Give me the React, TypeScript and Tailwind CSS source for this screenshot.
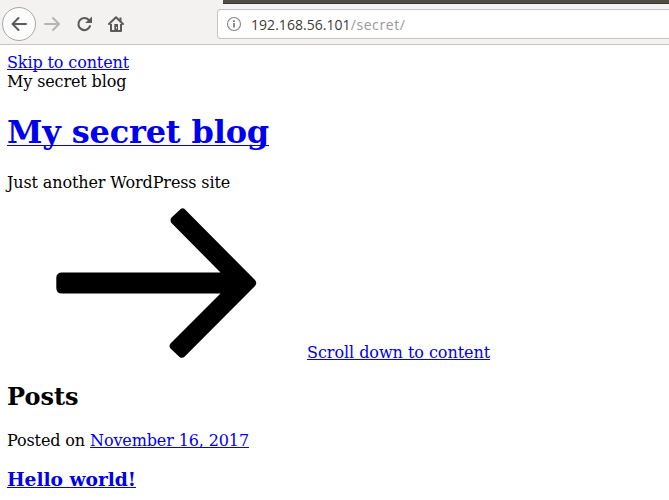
function Toolbar() {
  return (
    <header className="h-[45px] border-b border-[#c9c5c1] bg-[#f3f2f0]">
      <div className="ml-[223px] h-1 border-b border-[#3b3832] bg-[#504d45]" />
      <div className="flex h-10 items-center">
        <svg width="217" height="40" viewBox="0 4 217 40" fill="none" className="shrink-0">
          <circle cx="19" cy="24" r="16.5" fill="#fcfcfc" stroke="#aaa8a6" />
          <path d="M26 24H12.5M18.5 18l-6 6 6 6" stroke="#5c5b59" strokeWidth="2" strokeLinecap="round" strokeLinejoin="round" />
          <path d="M45 24h13.5M53 18l6 6-6 6" stroke="#b5b4b2" strokeWidth="2" strokeLinecap="round" strokeLinejoin="round" />
          <path d="M90 26.2A6 6 0 1 1 88.8 20" stroke="#5c5b59" strokeWidth="2.1" strokeLinecap="round" />
          <path d="M92 16.5V23h-6.8Z" fill="#5c5b59" />
          <path d="M109 24l7-6.8 7 6.8" stroke="#5c5b59" strokeWidth="2" strokeLinecap="round" strokeLinejoin="round" />
          <path d="M111 24v7h10v-7M120.5 17.5v3.5" stroke="#5c5b59" strokeWidth="2" strokeLinejoin="round" />
          <path d="M114.3 31v-7h3.7v7Z" fill="#5c5b59" />
          <path d="M116 27h1v1.5h-1Z" fill="#f3f2f0" />
        </svg>
        <div className="flex h-[30px] flex-1 items-center rounded-l-[4px] border border-r-0 border-[#c6c3c0] bg-white pl-2">
          <svg width="16" height="16" viewBox="0 0 16 16" fill="none" className="shrink-0">
            <circle cx="8" cy="8" r="6.5" stroke="#858585" strokeWidth="1.1" />
            <path d="M8 7v4.5M8 4.3v1.6" stroke="#777" strokeWidth="1.7" />
          </svg>
          <span className="ml-[9px] mt-px whitespace-nowrap font-['Open_Sans',sans-serif] text-[14px] leading-5 text-[#3c3b37]">
            <span className="font-medium tracking-[0.04px]">192.168.56.101</span>
            <span className="tracking-[0.6px] text-[#999]">/secret/</span>
          </span>
        </div>
      </div>
    </header>
  );
}

const link = "text-[#0000ee] underline decoration-1";

export default function App() {
  return (
    <div className="h-[500px] w-[669px] overflow-hidden bg-white text-black">
      <Toolbar />
      <main className="pl-[7px] pt-2 font-['DejaVu_Serif',serif] text-[16px] leading-[19px] tracking-[-0.12px] [text-decoration-skip-ink:none]">
        <div><a href="#content" className={link}>Skip to content</a></div>
        <div>My secret blog</div>
        <h1 className="mt-[22px] text-[32px] font-bold leading-[38px] tracking-[-0.17px]">
          <a href="#home" className={`${link} underline-offset-[2px]`}>My secret blog</a>
        </h1>
        <p className="mt-[22px]">Just another WordPress site</p>
        <div className="mt-4 flex h-[154px] items-end">
          <svg width="300" height="150" viewBox="7 208 300 150" className="mb-1 shrink-0">
            <path d="M181 208.8Q182.7 207.5 184.3 208.8L255 280Q257.5 283 255 286L184.5 356.8Q182 358.8 179.5 357L170.5 348.5Q168.5 346 170.5 343.5L220.5 293.5H62Q56.3 293.5 56.3 288V278Q56.3 272.5 62 272.5H220.5L171.5 223Q169.5 220 171.5 217.5Z" fill="black" />
          </svg>
          <a href="#content" className={`${link} tracking-[-0.05px]`}>Scroll down to content</a>
        </div>
        <h2 className="mt-5 text-[24px] font-bold leading-[29px] tracking-normal">Posts</h2>
        <p className="mt-5">Posted on <a href="#date" className={link}>November 16, 2017</a></p>
        <h3 className="mt-[18px] text-[18.72px] font-bold leading-[22px] tracking-[-0.05px]">
          <a href="#hello" className={link}>Hello world!</a>
        </h3>
      </main>
    </div>
  );
}
